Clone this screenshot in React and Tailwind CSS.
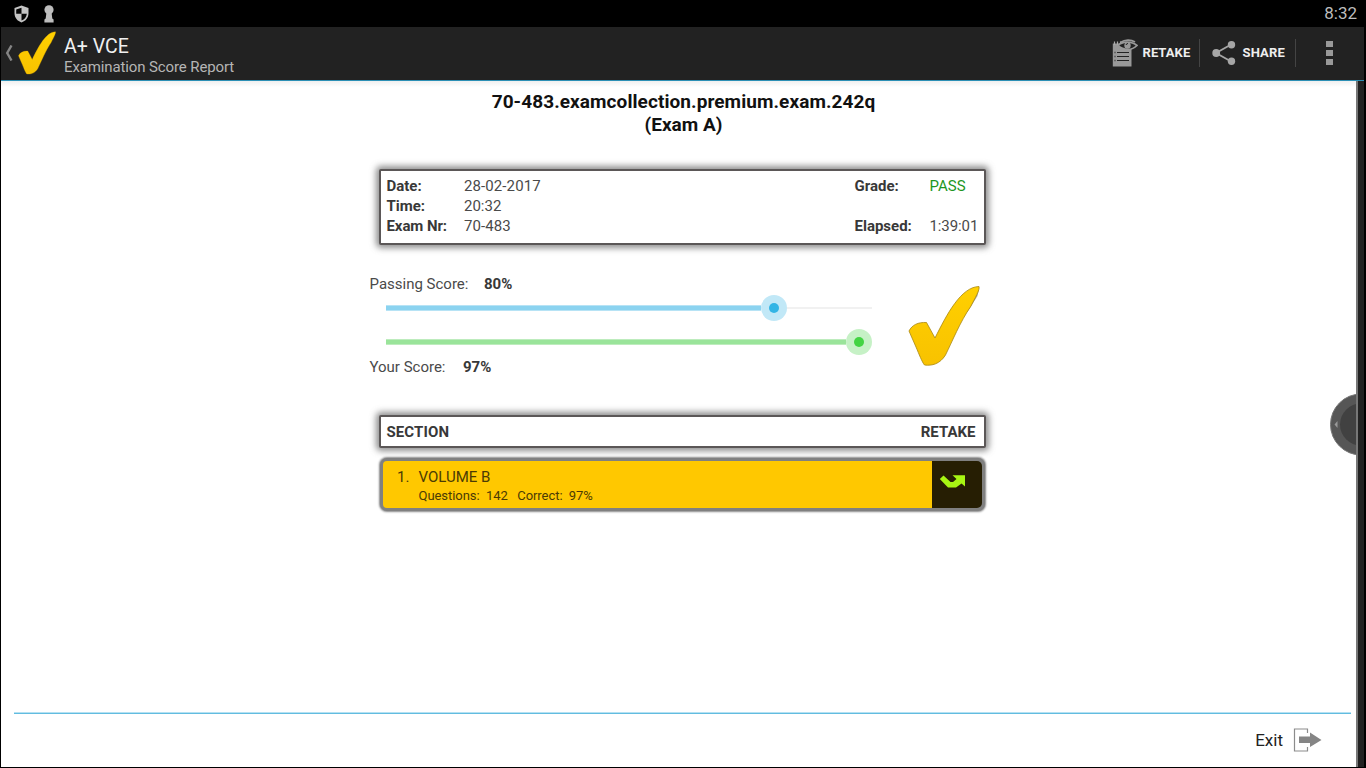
import React from "react";

function Check({ className, shadow }) {
  return (
    <svg viewBox="0 0 72 82" preserveAspectRatio="none" className={className}>
      <defs>
        <linearGradient id="gold" x1="0" y1="0" x2="0" y2="1">
          <stop offset="0" stopColor="#ffd000" />
          <stop offset="1" stopColor="#f8c200" />
        </linearGradient>
      </defs>
      {shadow && <path d="M71 4 69.500 11 60 26 54 33Z" fill="#777" opacity=".6" />}
      <path
        d="M1 46C4 40 10 37 18.500 37.500L27 53C39 29 53 2 71 1.500C72 5 67 13 63 21C52 37 44 57 37.500 70C32 79 24 81 16.500 80C14 77 11 69 8 62Z"
        fill="url(#gold)"
        stroke={shadow ? "#a88710" : "#e0a800"}
        strokeWidth={shadow ? ".8" : ".6"}
      />
    </svg>
  );
}

function StatusBar() {
  return (
    <div className="flex h-[27px] shrink-0 items-center bg-black pr-[9px] pl-[14px] text-[#bdbdbd]">
      <svg width="15" height="18" viewBox="0 0 15 18">
        <path d="M7.500 .5 14.500 3V8C14.500 13 11.500 16 7.500 17.500C3.500 16 .5 13 .5 8V3Z" fill="#c4c4c4" />
        <path d="M7.500 2.700V8.700H2.200V4.500ZM7.500 8.700H12.800C12.400 12 10.700 14.300 7.500 15.600Z" fill="#050505" />
      </svg>
      <svg width="10" height="18" viewBox="0 0 10 18" className="ml-[15px]">
        <circle cx="5" cy="4.800" r="4.600" fill="#bdbdbd" />
        <path d="M2.500 7H7.500L8.300 13.500 9.600 14.500V17.500H.4V14.500L1.700 13.500Z" fill="#bdbdbd" />
      </svg>
      <span className="ml-auto text-[17px] leading-[27px]">8:32</span>
    </div>
  );
}

function ActionBar() {
  return (
    <header className="flex h-[54px] shrink-0 items-center border-b border-[#2c8fb5] bg-[#222] pl-[4px]">
      <svg width="8" height="16" viewBox="0 0 8 16" className="mb-px shrink-0">
        <path d="M6.500 .5 2.200 8 6.500 15.500" fill="none" stroke="#858585" strokeWidth="2.400" />
      </svg>
      <Check className="mb-[2px] ml-[5px] h-[44px] w-[38px]" />
      <div className="mt-[5px] ml-[8px] flex flex-col">
        <span className="text-[19.500px] leading-[22px] tracking-[0.05px] text-[#f0f0f0]">A+ VCE</span>
        <span className="text-[15px] leading-[19px] tracking-[-0.12px] text-[#b5b5b5]">Examination Score Report</span>
      </div>
      <div className="ml-auto flex h-full items-center text-[13px] font-bold text-[#eee]">
        <svg width="26" height="28" viewBox="0 0 26 28" className="mb-[2px]">
          <path d="M.8 4.500H19.500V27.500H.8Z" fill="#999" />
          <path d="M5 13.500H17M5 17.500H17M5 21.500H17" stroke="#222" strokeWidth="1.200" />
          <path d="M2.500 13.500H3.500M2.500 17.500H3.500M2.500 21.500H3.500" stroke="#333" strokeWidth="1.300" />
          <path d="M2.500 2.500V6M5.500 2.500V6M8.500 2.500V6" stroke="#aaa" strokeWidth="1.200" />
          <path d="M6 6.500C10 2.500 19 1.500 25 6.500C20 11.500 12 12 6 6.500Z" fill="#222" stroke="#999" strokeWidth="1.700" />
          <path d="M8.500 3.500C13 .3 19 .3 23 3" fill="none" stroke="#999" strokeWidth="1.700" />
          <circle cx="15.500" cy="6.500" r="3.200" fill="#999" />
          <path d="M14 6A2 2 0 0 1 16 4.500" stroke="#222" fill="none" />
        </svg>
        <span className="mb-[2px] ml-[4.500px] w-[56.500px] tracking-[0.05px]">RETAKE</span>
        <span className="mb-px h-[28px] w-px bg-[#444]" />
        <svg width="24" height="26" viewBox="0 0 24 26" className="mb-px ml-[12px]">
          <path d="M20 4 4 13 20 22" fill="none" stroke="#a6a6a6" strokeWidth="1.800" />
          <circle cx="19.500" cy="4.700" r="3.700" fill="#a6a6a6" />
          <circle cx="4.200" cy="13" r="3.900" fill="#a6a6a6" />
          <circle cx="19.500" cy="21.300" r="3.700" fill="#a6a6a6" />
        </svg>
        <span className="mb-[2px] ml-[6.500px] w-[52.500px] tracking-[0.15px]">SHARE</span>
        <span className="mb-px h-[28px] w-px bg-[#444]" />
        <div className="mr-[31px] mb-px ml-[30px] flex flex-col gap-[3px]">
          <i className="h-[6px] w-[7px] bg-[#999]" />
          <i className="h-[6px] w-[7px] bg-[#999]" />
          <i className="h-[6px] w-[7px] bg-[#999]" />
        </div>
      </div>
    </header>
  );
}

function Summary() {
  return (
    <section className="ml-[378px] grid h-[76px] w-[607px] grid-cols-[77.500px_390.500px_75px_1fr] grid-rows-[20px_20px_20px] rounded-[2px] border-2 border-[#5b5757] bg-white pt-[5px] pl-[5.500px] text-[15px] leading-[20px] whitespace-nowrap text-[#4a4a4a] shadow-[0_0_6px_3px_#666b]">
      <b className="text-[#383838]">Date:</b>
      <span className="tracking-[0.1px]">28-02-2017</span>
      <b className="text-[#383838]">Grade:</b>
      <span className="text-[#1e961e]">PASS</span>
      <b className="text-[#383838]">Time:</b>
      <span className="col-span-3">20:32</span>
      <b className="tracking-[-0.08px] text-[#383838]">Exam Nr:</b>
      <span className="tracking-[0.1px]">70-483</span>
      <b className="text-[#383838]">Elapsed:</b>
      <span className="tracking-[-0.1px]">1:39:01</span>
    </section>
  );
}

function Bar({ tone, percent }) {
  const blue = tone === "blue";
  return (
    <div className="flex h-[26px] w-[486px] items-center">
      <div
        className={
          blue
            ? "h-[6px] border-y border-[#b7e3f5] bg-[#8bd3f0]"
            : "h-[6px] border-y border-[#bdecbd] bg-[#9ae49a]"
        }
        style={{ width: `calc(${percent}% - ${blue ? 13 : 10.5}px)` }}
      />
      <div
        className={
          blue
            ? "flex size-[26px] shrink-0 items-center justify-center rounded-full bg-[#c1e8f7]"
            : "flex size-[26px] shrink-0 items-center justify-center rounded-full bg-[#c6f1c6]"
        }
      >
        <i className={blue ? "size-[10px] rounded-full bg-[#33b5e5]" : "size-[10px] rounded-full bg-[#43d443]"} />
      </div>
      <i className="h-[2px] flex-1 bg-[#f1f1f1]" />
    </div>
  );
}

function Scores() {
  return (
    <section className="mt-[29px] ml-[368.500px] flex h-[110px] text-[15px] leading-[20px] whitespace-nowrap text-[#4a4a4a]">
      <div className="w-[538.500px]">
        <p className="flex h-[21px]">
          <span className="w-[114.500px]">Passing Score:</span>
          <b className="text-[#383838]">80%</b>
        </p>
        <div className="ml-[16.500px] flex flex-col gap-[8px]">
          <Bar tone="blue" percent={79.8} />
          <Bar tone="green" percent={97} />
        </div>
        <p className="mt-[2px] flex">
          <span className="w-[93.500px]">Your Score:</span>
          <b className="text-[#383838]">97%</b>
        </p>
      </div>
      <Check shadow className="mt-[11px] h-[82px] w-[72px]" />
    </section>
  );
}

function Sections() {
  return (
    <section className="ml-[378px] w-[607px] whitespace-nowrap">
      <div className="mt-[31px] flex h-[33px] items-center justify-between rounded-[2px] border-2 border-[#5b5757] bg-white pt-px pr-[8.500px] pl-[5.500px] text-[15px] font-bold text-[#383838] shadow-[0_0_6px_3px_#666b]">
        <span className="tracking-[0.1px]">SECTION</span>
        <span>RETAKE</span>
      </div>
      <div className="mt-[10px] ml-px flex h-[53px] w-[605px] rounded-[7px] border-[3px] border-[#808080] bg-[#808080] shadow-[0_0_2px_1px_#888]">
        <div className="flex flex-1 rounded-l-[4px] bg-[#ffc800] pt-[5px] text-[#4b3b05]">
          <span className="ml-[14px] w-[21.500px] text-[15px] leading-[22px]">1.</span>
          <div className="flex flex-col">
            <span className="text-[15px] leading-[22px]">VOLUME B</span>
            <span className="text-[13px] leading-[15px] tracking-[-0.05px] whitespace-pre">Questions:  142   Correct:  97%</span>
          </div>
        </div>
        <div className="w-[50px] rounded-r-[5px] bg-[#261e03] pt-[13px] pl-[7px]">
          <svg width="27" height="15" viewBox="0 0 27 15">
            <path d="M.8 5 4.500 1.500 11.500 8H14L17.500 5 13.500 1.200H26V12.500L22.500 9.500 17 13.500H9Z" fill="#a8f613" />
          </svg>
        </div>
      </div>
    </section>
  );
}

export default function App() {
  return (
    <div className="flex h-[768px] w-[1366px] flex-col overflow-hidden bg-black font-['Roboto',sans-serif]">
      <StatusBar />
      <div className="mr-[2px] mb-px ml-px flex flex-1 flex-col bg-[#222]">
        <ActionBar />
        <main className="relative mr-[6px] flex flex-1 flex-col border-r-2 border-[#777] bg-white">
          <div className="h-[6px] bg-linear-to-b from-[#f0f0f0] to-white" />
          <h1 className="ml-[378px] h-[82px] w-[609px] pt-[4px] text-center text-[19px] leading-[22.500px] font-bold whitespace-nowrap text-[#111]">
            <span className="tracking-[0.08px]">70-483.examcollection.premium.exam.242q</span>
            <br />
            (Exam A)
          </h1>
          <Summary />
          <Scores />
          <Sections />
          <div className="absolute top-[312px] right-0 h-[63px] w-[27px] overflow-hidden">
            <svg width="27" height="63" viewBox="0 0 27 63">
              <circle cx="32" cy="31.500" r="30.500" fill="#565656" stroke="#777" strokeWidth="1" />
              <circle cx="32" cy="31.500" r="21" fill="#414141" />
              <path d="M5.500 31.500 8.500 28V35Z" fill="#999" />
            </svg>
          </div>
          <footer className="mt-auto mr-[5px] ml-[13px] flex h-[55px] flex-col">
            <div className="h-px bg-[#b5e1f2]" />
            <div className="h-px bg-[#62bce0]" />
            <div className="flex flex-1 items-center pr-[29px] pb-px text-[#222]">
              <span className="ml-auto text-[17px] leading-[22px]">Exit</span>
              <svg width="29" height="24" viewBox="0 0 29 24" className="ml-[10px]">
                <path d="M14.500 5V1H1.500V23H14.500V19" fill="none" stroke="#8c8c8c" strokeWidth="1.200" />
                <path d="M6 8.500H17V4.500L28.500 12 17 19V15H6Z" fill="#858585" />
              </svg>
            </div>
          </footer>
        </main>
      </div>
    </div>
  );
}
